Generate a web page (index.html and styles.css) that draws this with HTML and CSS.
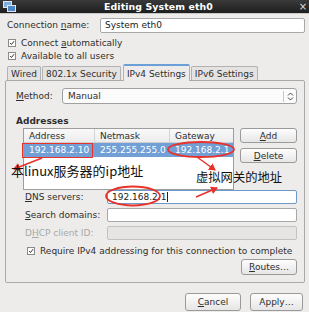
FILE: index.html
```html
<!DOCTYPE html>
<html>
<head>
<meta charset="utf-8">
<link rel="stylesheet" href="styles.css">
</head>
<body>
<div class="window">
  <div class="titlebar">
    <svg class="appicon" width="13" height="11" viewBox="0 0 13 11">
      <rect x="0.5" y="0.5" width="8" height="6" fill="#7fb0e0" stroke="#dfe8f2"/>
      <rect x="4.5" y="4.5" width="8" height="6" fill="#4d86c6" stroke="#dfe8f2"/>
    </svg>
    <div class="title">Editing System eth0</div>
    <div class="close">×</div>
  </div>
  <div class="content">
    <div class="row conn">
      <label class="lbl-conn">Connection <u>n</u>ame:</label>
      <div class="entry">System eth0</div>
    </div>
    <div class="check first"><span class="cb"><svg width="8" height="8" viewBox="0 0 8 8"><path d="M1.5 4 L3.3 6 L6.8 1.5" fill="none" stroke="#333" stroke-width="1.3"/></svg></span><span>Connect <u>a</u>utomatically</span></div>
    <div class="check"><span class="cb"><svg width="8" height="8" viewBox="0 0 8 8"><path d="M1.5 4 L3.3 6 L6.8 1.5" fill="none" stroke="#333" stroke-width="1.3"/></svg></span><span>Available to all users</span></div>
    <div class="tabs">
      <div class="tab">Wired</div>
      <div class="tab">802.1x Security</div>
      <div class="tab active">IPv4 Settings</div>
      <div class="tab">IPv6 Settings</div>
    </div>
    <div class="panel">
      <div class="row method">
        <label class="lbl-method"><u>M</u>ethod:</label>
        <div class="combo"><span>Manual</span><span class="arrows"><svg width="7" height="9" viewBox="0 0 7 9"><path d="M1 3.5 L3.5 1 L6 3.5 M1 5.5 L3.5 8 L6 5.5" fill="none" stroke="#444" stroke-width="1"/></svg></span></div>
      </div>
      <div class="heading">Addresses</div>
      <div class="addr">
        <div class="table">
          <div class="thead">
            <div class="c1">Address</div><div class="c2">Netmask</div><div class="c3">Gateway</div>
          </div>
          <div class="trow sel">
            <div class="c1">192.168.2.10</div><div class="c2">255.255.255.0</div><div class="c3">192.168.2.1</div>
          </div>
        </div>
        <div class="btncol">
          <div class="btn"><span><u>A</u>dd</span></div>
          <div class="btn"><span><u>D</u>elete</span></div>
        </div>
      </div>
      <div class="frow">
        <label class="flbl"><u>D</u>NS servers:</label>
        <div class="entry focus"><span>192.168.2.1</span><span class="caret"></span></div>
      </div>
      <div class="frow">
        <label class="flbl"><u>S</u>earch domains:</label>
        <div class="entry"></div>
      </div>
      <div class="frow dis">
        <label class="flbl">D<u>H</u>CP client ID:</label>
        <div class="entry disabled"></div>
      </div>
      <div class="check req"><span class="cb"><svg width="8" height="8" viewBox="0 0 8 8"><path d="M1.5 4 L3.3 6 L6.8 1.5" fill="none" stroke="#333" stroke-width="1.3"/></svg></span><span>Require IPv4 addressing for this connection to complete</span></div>
      <div class="routes"><div class="btn wide"><span><u>R</u>outes…</span></div></div>
    </div>
    <div class="footer">
      <div class="btn fbtn cancel"><span><u>C</u>ancel</span></div>
      <div class="btn fbtn apply"><span>Apply…</span></div>
    </div>
  </div>

  <svg class="annot" width="309" height="312" viewBox="0 0 309 312">
    <defs>
      <marker id="ah" markerWidth="8" markerHeight="8" refX="6" refY="4" orient="auto" markerUnits="userSpaceOnUse">
        <path d="M0 0 L7 4 L0 8 Z" fill="#e8322a"/>
      </marker>
    </defs>
    <rect x="22.5" y="143.5" width="70" height="14" fill="none" stroke="#e8322a" stroke-width="1"/>
    <ellipse cx="201" cy="149.5" rx="33" ry="7.5" fill="none" stroke="#e8322a" stroke-width="1.8"/>
    <ellipse cx="133" cy="196" rx="27" ry="9.5" fill="none" stroke="#e8322a" stroke-width="1.8"/>
    <line x1="42" y1="158" x2="14" y2="169" stroke="#e8322a" stroke-width="1.5" marker-end="url(#ah)"/>
    <line x1="197" y1="157" x2="215" y2="170" stroke="#e8322a" stroke-width="1.5" marker-end="url(#ah)"/>
    <line x1="196" y1="197" x2="217" y2="188" stroke="#e8322a" stroke-width="1.5" marker-end="url(#ah)"/>
  </svg>
  <div class="note note1">本linux服务器的ip地址</div>
  <div class="note note2">虚拟网关的地址</div>
</div>
</body>
</html>
```
FILE: styles.css
```css
* { box-sizing: border-box; }
html, body { margin: 0; padding: 0; }
body { width: 309px; height: 312px; overflow: hidden; background: #edeceb; }
u { text-decoration: underline; text-underline-offset: 1px; }
.window {
  position: relative;
  width: 309px; height: 312px;
  font-family: "DejaVu Sans", sans-serif;
  font-size: 9px;
  color: #2e2e2e;
  background: #edeceb;
}
.titlebar {
  height: 14px;
  background: linear-gradient(#3a3a3a, #1e1e1e);
  display: flex; align-items: center;
  color: #fff;
  border-bottom: 1px solid #c9c9c9;
}
.appicon { margin-left: 3px; flex: none; }
.title { flex: 1; text-align: center; font-weight: bold; font-size: 9.4px; padding-left: 4px; letter-spacing: 0.1px; }
.close { width: 12px; font-size: 10px; color: #ddd; text-align: center; }
.content { padding: 0 4px 0 5px; }
.row { display: flex; align-items: center; }
.conn { margin-top: 3px; height: 16px; }
.lbl-conn { width: 95px; padding-left: 2px; }
.entry {
  flex: 1; height: 15px;
  background: #fff;
  border: 1px solid #a8a8a8;
  border-radius: 2px;
  padding: 0 4px;
  display: flex; align-items: center;
  color: #222;
}
.check { display: flex; align-items: center; height: 13px; padding-left: 3px; }
.check.first { margin-top: 3px; }
.cb {
  width: 8px; height: 8px; margin-right: 5px;
  border: 1px solid #8a8a8a; background: #fff;
  display: inline-flex; align-items: center; justify-content: center;
  flex: none;
}
.cb svg { display: block; }
.tabs { display: flex; align-items: flex-end; height: 18px; padding-left: 2px; }
.tab {
  height: 14px;
  padding: 0 3px;
  border: 1px solid #b2b2b2; border-bottom: none;
  border-radius: 2px 2px 0 0;
  background: #e4e3e2;
  display: flex; align-items: center;
  margin-right: 1px;
}
.tab.active { height: 17px; background: #edeceb; border-top: 2px solid #6b9fd8; position: relative; top: 1px; margin: 0 1px 0 1px; }
.panel {
  height: 203px;
  border: 1px solid #a9a9a9;
  border-radius: 2px;
  padding: 7px 7px 0 10px;
}
.method { height: 16px; }
.lbl-method { width: 46px; }
.combo {
  flex: 1; height: 16px;
  background: #fbfbfb;
  border: 1px solid #a0a0a0; border-radius: 3px;
  display: flex; align-items: center; justify-content: space-between;
  padding-left: 5px;
}
.arrows { width: 13px; height: 11px; border-left: 1px solid #c8c8c8; display: flex; align-items: center; justify-content: center; }
.heading { font-weight: bold; margin-top: 11px; height: 12px; line-height: 12px; }
.addr { display: flex; margin-top: 1px; padding-left: 7px; }
.table {
  width: 211px; height: 62px;
  background: #fff;
  border: 1px solid #9d9d9d;
}
.thead, .trow { display: flex; }
.thead { height: 14px; background: linear-gradient(#fafafa, #ececec); border-bottom: 1px solid #cfcfcf; }
.thead > div { display: flex; align-items: center; padding-left: 5px; border-right: 1px solid #d4d4d4; }
.c1 { width: 71px; }
.c2 { width: 75px; }
.c3 { flex: 1; border-right: none !important; }
.trow { height: 14px; }
.trow > div { display: flex; align-items: center; padding-left: 5px; }
.trow.sel { background: #719fd6; color: #fff; }
.btncol { margin-left: 6px; flex: 1; display: flex; flex-direction: column; gap: 5px; }
.btn {
  height: 15px;
  border: 1px solid #9a9a9a; border-radius: 3px;
  background: linear-gradient(#fdfdfd, #e6e6e6);
  display: flex; align-items: center; justify-content: center;
  color: #2e2e2e;
}
.frow { display: flex; align-items: center; height: 14px; margin-top: 4px; padding-left: 9px; }
.addr + .frow { margin-top: 0; }
.frow .entry { height: 14px; }
.flbl { width: 82px; }
.entry.focus { border-color: #6d98c9; }
.caret { display: inline-block; width: 1px; height: 10px; background: #222; margin-left: 1px; }
.dis { color: #a8a8a8; }
.entry.disabled { background: #e6e5e4; border-color: #c2c2c2; }
.req { padding-left: 11px; margin-top: 5px; height: 12px; }
.routes { display: flex; justify-content: flex-end; margin-top: 2px; }
.btn.wide { width: 56px; height: 16px; }
.footer { display: flex; justify-content: flex-end; gap: 9px; margin-top: 10px; padding-right: 2px; }
.fbtn { height: 18px; }
.cancel { width: 56px; }
.apply { width: 53px; }
.annot { position: absolute; left: 0; top: 0; pointer-events: none; }
.note {
  position: absolute;
  font-family: "Noto Sans CJK SC", sans-serif;
  color: #111;
  white-space: nowrap;
  line-height: 1;
}
.note1 { left: 11px; top: 164px; font-size: 13px; }
.note2 { left: 196px; top: 171px; font-size: 12.3px; }
```
